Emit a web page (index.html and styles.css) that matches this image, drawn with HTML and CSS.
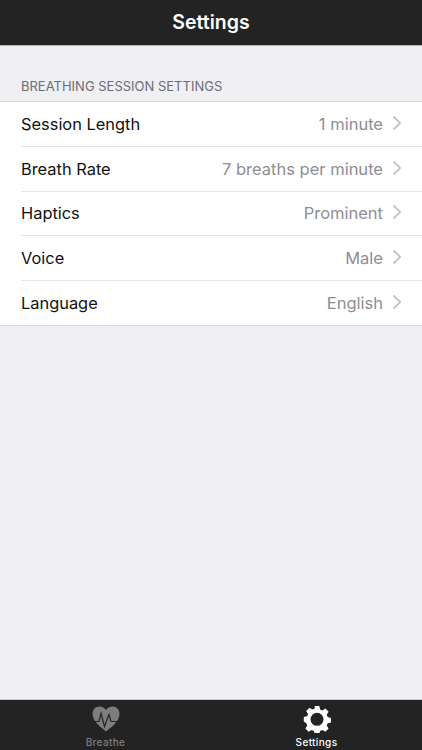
FILE: index.html
```html
<!DOCTYPE html>
<html lang="en">
<head>
<meta charset="utf-8">
<title>Settings</title>
<link rel="stylesheet" href="styles.css">
</head>
<body>
<div class="app">
  <header class="navbar"><h1 class="navbar-title">Settings</h1></header>
  <main class="content">
    <h2 class="section-title">BREATHING SESSION SETTINGS</h2>
    <ul class="list">
      <li class="row"><span class="row-label">Session Length</span><span class="row-value">1 minute</span><svg class="chevron" viewBox="0 0 10 16"><path d="M1.5 1.5 8.2 8l-6.700 6.500"/></svg></li>
      <li class="row"><span class="row-label">Breath Rate</span><span class="row-value">7 breaths per minute</span><svg class="chevron" viewBox="0 0 10 16"><path d="M1.5 1.5 8.2 8l-6.700 6.500"/></svg></li>
      <li class="row"><span class="row-label">Haptics</span><span class="row-value">Prominent</span><svg class="chevron" viewBox="0 0 10 16"><path d="M1.5 1.5 8.2 8l-6.700 6.500"/></svg></li>
      <li class="row"><span class="row-label">Voice</span><span class="row-value">Male</span><svg class="chevron" viewBox="0 0 10 16"><path d="M1.5 1.5 8.2 8l-6.700 6.500"/></svg></li>
      <li class="row"><span class="row-label">Language</span><span class="row-value">English</span><svg class="chevron" viewBox="0 0 10 16"><path d="M1.5 1.5 8.2 8l-6.700 6.500"/></svg></li>
    </ul>
  </main>
  <nav class="tabbar">
    <div class="tab">
      <svg class="tab-icon" viewBox="0 0 28 28">
        <path class="heart" d="M14 26.500C9 22.500 .5 16.500.5 8.800.5 4.300 3.800 1.500 7.500 1.500c2.800 0 5 1.300 6.500 3.500 1.500-2.200 3.700-3.500 6.500-3.500 3.700 0 7 2.800 7 7.300 0 7.700-8.500 13.700-13.500 17.700z"/>
        <path class="pulse" d="M1.500 16.500H7l2-8 3.500 13 4.500-12 2 7h7.500"/>
      </svg>
      <span class="tab-label">Breathe</span>
    </div>
    <div class="tab tab-active">
      <svg class="tab-icon" viewBox="0 0 28 28">
        <path fill-rule="evenodd" d="M11.700 1h4.600l.8 3.500 2.300 1 3-1.900 3.200 3.200-1.900 3 1 2.300 3.300.8v4.600l-3.300.8-1 2.300 1.900 3-3.200 3.200-3-1.900-2.300 1-.8 3.100h-4.600l-.8-3.100-2.300-1-3 1.900-3.200-3.200 1.900-3-1-2.300L.8 16.600V12l3.300-.8 1-2.300-1.900-3 3.200-3.200 3 1.900 2.300-1zM14 7.800a6.500 6.500 0 1 0 0 13 6.500 6.500 0 0 0 0-13z"/>
      </svg>
      <span class="tab-label">Settings</span>
    </div>
  </nav>
</div>
</body>
</html>
```
FILE: styles.css
```css
* { box-sizing: border-box; margin: 0; padding: 0; }
html, body { height: 100%; }
body { font-family: Inter, "Liberation Sans", sans-serif; background: #efeff4; overflow: hidden; }
.app { display: flex; flex-direction: column; height: 750px; width: 422px; }
.navbar { height: 46px; flex: none; background: #232323; border-bottom: 1px solid #b4b4b6; display: flex; align-items: center; justify-content: center; padding-bottom: 2px; }
.navbar-title { font-size: 19.500px; font-weight: 600; color: #fff; line-height: 24px; }
.content { flex: 1; }
.section-title { font-size: 13px; font-weight: 400; color: #6d6d72; line-height: 16px; padding: 32px 21px 7px; }
.list { list-style: none; background: #fff; border-top: 1px solid #dcdcdf; border-bottom: 1px solid #dcdcdf; }
.row { height: 44.800px; margin-left: 21px; padding-right: 20px; display: flex; align-items: center; border-bottom: 1px solid #e6e6e8; }
.row:last-child { border-bottom: 0; height: 43.600px; }
.row-label { flex: 1; font-size: 16.400px; color: #111; }
.row-value { font-size: 16.500px; color: #8e8e93; }
.chevron { width: 10px; height: 16px; margin-left: 9px; margin-top: -2px; fill: none; stroke: #c4c4c7; stroke-width: 1.800; }
.tabbar { height: 51px; flex: none; background: #232323; border-top: 1px solid #c9c9cc; display: flex; }
.tab { flex: 1; display: flex; flex-direction: column; align-items: center; padding-top: 5px; color: #7d7d7d; }
.tab-icon { width: 28px; height: 28px; display: block; }
.tab-label { font-size: 10px; font-weight: 500; line-height: 12px; margin-top: 3px; letter-spacing: .35px; }
.tab-active { color: #fff; }
.tab-active .tab-icon { fill: #fff; }
.heart { fill: #7d7d7d; }
.pulse { fill: none; stroke: #232323; stroke-width: 1.200; }
```
